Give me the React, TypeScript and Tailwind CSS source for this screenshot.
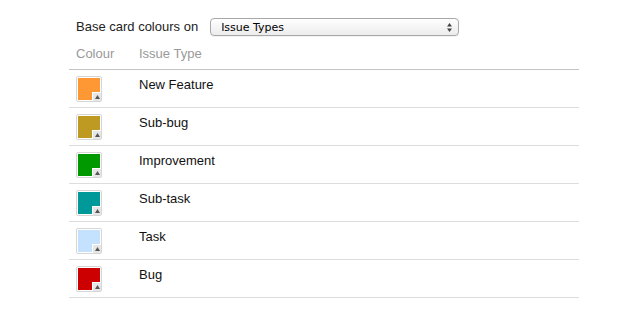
import React from "react";

const rows = [
  { name: "New Feature", color: "#fd9834" },
  { name: "Sub-bug", color: "#bf9a22" },
  { name: "Improvement", color: "#009900" },
  { name: "Sub-task", color: "#009999" },
  { name: "Task", color: "#c4e2fe" },
  { name: "Bug", color: "#cc0000" },
];

function Swatch({ color }: { color: string }) {
  return (
    <div className="relative w-[26px] h-[26px] border border-[#d6d6d6] rounded-[2px] p-[1px] bg-white">
      <div className="w-full h-full" style={{ backgroundColor: color }} />
      <div className="absolute right-0 bottom-0 w-[9px] h-[9px] bg-[#e6e6e6] border-l border-t border-white flex items-center justify-center">
        <svg width="5" height="4" viewBox="0 0 5 4">
          <path d="M2.5 0 L5 4 L0 4 Z" fill="#555" />
        </svg>
      </div>
    </div>
  );
}

export default function App() {
  return (
    <div className="w-[640px] h-[329px] bg-white overflow-hidden text-[13px] text-[#222] font-['Liberation_Sans',Arial,sans-serif]">
      <div className="ml-[69px] w-[510px] pt-[18px]">
        <div className="flex items-center h-[18px] pl-[7px]">
          <span className="text-[#222]">Base card colours on</span>
          <div className="ml-[12px] w-[249px] h-[18px] rounded-[4px] border border-[#a8a8a8] bg-gradient-to-b from-white to-[#ececec] flex items-center justify-between pl-[10px] pr-[6px] shadow-[0_1px_0_rgba(0,0,0,0.05)]">
            <span className="text-[11px] text-black font-['DejaVu_Sans',sans-serif] leading-none">Issue Types</span>
            <svg width="5" height="9" viewBox="0 0 5 9">
              <path d="M2.5 0 L5 3.5 L0 3.5 Z" fill="#444" />
              <path d="M2.5 9 L5 5.5 L0 5.5 Z" fill="#444" />
            </svg>
          </div>
        </div>
        <div className="h-[34px] pt-[10px] border-b border-[#c4c4c4] flex text-[#999] leading-[16px]">
          <div className="w-[70px] pl-[7px]">Colour</div>
          <div>Issue Type</div>
        </div>
        {rows.map((r) => (
          <div key={r.name} className="h-[38px] border-b border-[#dddddd] flex items-start">
            <div className="w-[70px] pl-[7px] pt-[6px]">
              <Swatch color={r.color} />
            </div>
            <div className="pt-[7px] leading-[16px] text-[#111]">{r.name}</div>
          </div>
        ))}
      </div>
    </div>
  );
}
